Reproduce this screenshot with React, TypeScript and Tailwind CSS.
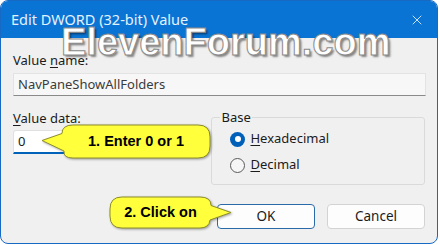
import { X } from "lucide-react";

// yellow speech bubble with a pointer, drawn as svg
const Callout = ({ side, w, h, text }: { side: "left" | "right"; w: number; h: number; text: string }) => {
  const tip = 20;
  const r = 12;
  const W = w + tip;
  // bubble body path
  let d = "";
  if (side === "left") {
    const x0 = tip;
    d = `M${x0 + r},1 H${W - r - 1} Q${W - 1},1 ${W - 1},${r + 1} V${h - r - 1} Q${W - 1},${h - 1} ${W - r - 1},${h - 1} H${x0 + r} Q${x0 + 2},${h - 1} ${x0 + 3},${h - 8} L1,${h / 2 - 1} L${x0 + 1},${h / 2 - 8} Q${x0 + 1},1 ${x0 + r},1 Z`;
  } else {
    const x1 = w;
    d = `M${r + 1},1 H${x1 - r} Q${x1 - 1},1 ${x1 - 1},${h / 2 - 7} L${W - 1},${h / 2} L${x1 - 2},${h - 9} Q${x1 - 3},${h - 1} ${x1 - r},${h - 1} H${r + 1} Q1,${h - 1} 1,${h - r - 1} V${r + 1} Q1,1 ${r + 1},1 Z`;
  }
  return (
    <div className="relative" style={{ width: W, height: h }}>
      <svg width={W} height={h} className="absolute inset-0 overflow-visible [filter:drop-shadow(1px_1px_1px_rgba(0,0,0,0.35))]">
        <path d={d} fill="#ffff3c" stroke="#8d8d28" strokeWidth="1" />
      </svg>
      <div
        className="absolute inset-0 flex items-center justify-center font-bold text-[14.5px] text-black [font-family:'Liberation_Sans',Arial,sans-serif]"
        style={side === "left" ? { paddingLeft: tip } : { paddingRight: tip }}
      >
        {text}
      </div>
    </div>
  );
};

export default function App() {
  return (
    <div className="relative w-[440px] h-[245px] bg-white [font-family:'Noto_Sans',sans-serif] text-[#1b1b1b]">
      <div className="flex flex-col w-[438px] h-[244px] rounded-[8px] border border-[#1769c4] overflow-hidden bg-[#f0f0f0]">
        {/* title bar */}
        <div className="h-[37px] shrink-0 bg-[#0a74d4] flex items-center justify-between pl-[10px] pr-[12px]">
          <span className="text-[14.5px] text-[#e4f2ff]">Edit DWORD (32-bit) Value</span>
          <X className="w-[16px] h-[16px] text-[#e4f2ff]" strokeWidth={1.3} />
        </div>

        <div className="flex flex-col px-[12px] pt-[13px] text-[13px]">
          <div className="leading-[18px]">
            Value <span className="underline underline-offset-2">n</span>ame:
          </div>
          <div className="mt-[4px] w-[413px] h-[23px] bg-[#f7f7f7] border border-[#e3e3e3] border-b-[#8a8a8a] flex items-center px-[4px] text-[#3b3b3b]">
            NavPaneShowAllFolders
          </div>

          <div className="flex mt-[13px] gap-[15px]">
            <div className="flex flex-col w-[185px]">
              <div className="leading-[18px]">
                <span className="underline underline-offset-2">V</span>alue data:
              </div>
              <div className="mt-[3px] h-[24px] bg-white border border-[#e0e0e0] border-b-2 border-b-[#0062b8] rounded-t-[3px] flex items-center px-[4px]">
                0
              </div>
            </div>

            <fieldset className="w-[215px] h-[76px] border border-[#dadada] rounded-[3px] px-[18px]">
              <legend className="ml-[-10px] px-[1px] leading-[16px]">Base</legend>
              <div className="flex flex-col gap-[10px] pt-[6px]">
                <div className="flex items-center gap-[5px] h-[16px]">
                  <span className="w-[15px] h-[15px] rounded-full bg-[#005fb8] flex items-center justify-center">
                    <span className="w-[6px] h-[6px] rounded-full bg-white" />
                  </span>
                  <span>
                    <span className="underline underline-offset-2">H</span>exadecimal
                  </span>
                </div>
                <div className="flex items-center gap-[5px] h-[16px]">
                  <span className="w-[15px] h-[15px] rounded-full border border-[#5a5a5a] bg-[#f6f6f6]" />
                  <span>
                    <span className="underline underline-offset-2">D</span>ecimal
                  </span>
                </div>
              </div>
            </fieldset>
          </div>

          <div className="flex justify-end gap-[12px] mt-[19px] pr-[-1px]">
            <button className="w-[98px] h-[25px] rounded-[4px] bg-[#fdfdfd] border border-[#2a6aa8] text-[13.5px]">OK</button>
            <button className="w-[98px] h-[25px] rounded-[4px] bg-[#fdfdfd] border border-[#d3d3d3] text-[13.5px]">Cancel</button>
          </div>
        </div>
      </div>

      {/* watermark */}
      <div className="absolute left-[61px] top-[14px] text-[38px] font-bold text-white [font-family:'Liberation_Sans',Arial,sans-serif] [-webkit-text-stroke:1px_#8a8a8a] [text-shadow:2px_2px_2px_rgba(0,0,0,0.45)] pointer-events-none">
        ElevenForum.com
      </div>

      {/* callouts */}
      <div className="absolute left-[41px] top-[124px]">
        <Callout side="left" w={150} h={35} text="1. Enter 0 or 1" />
      </div>
      <div className="absolute left-[109px] top-[196px]">
        <Callout side="right" w={103} h={33} text="2. Click on" />
      </div>
    </div>
  );
}
